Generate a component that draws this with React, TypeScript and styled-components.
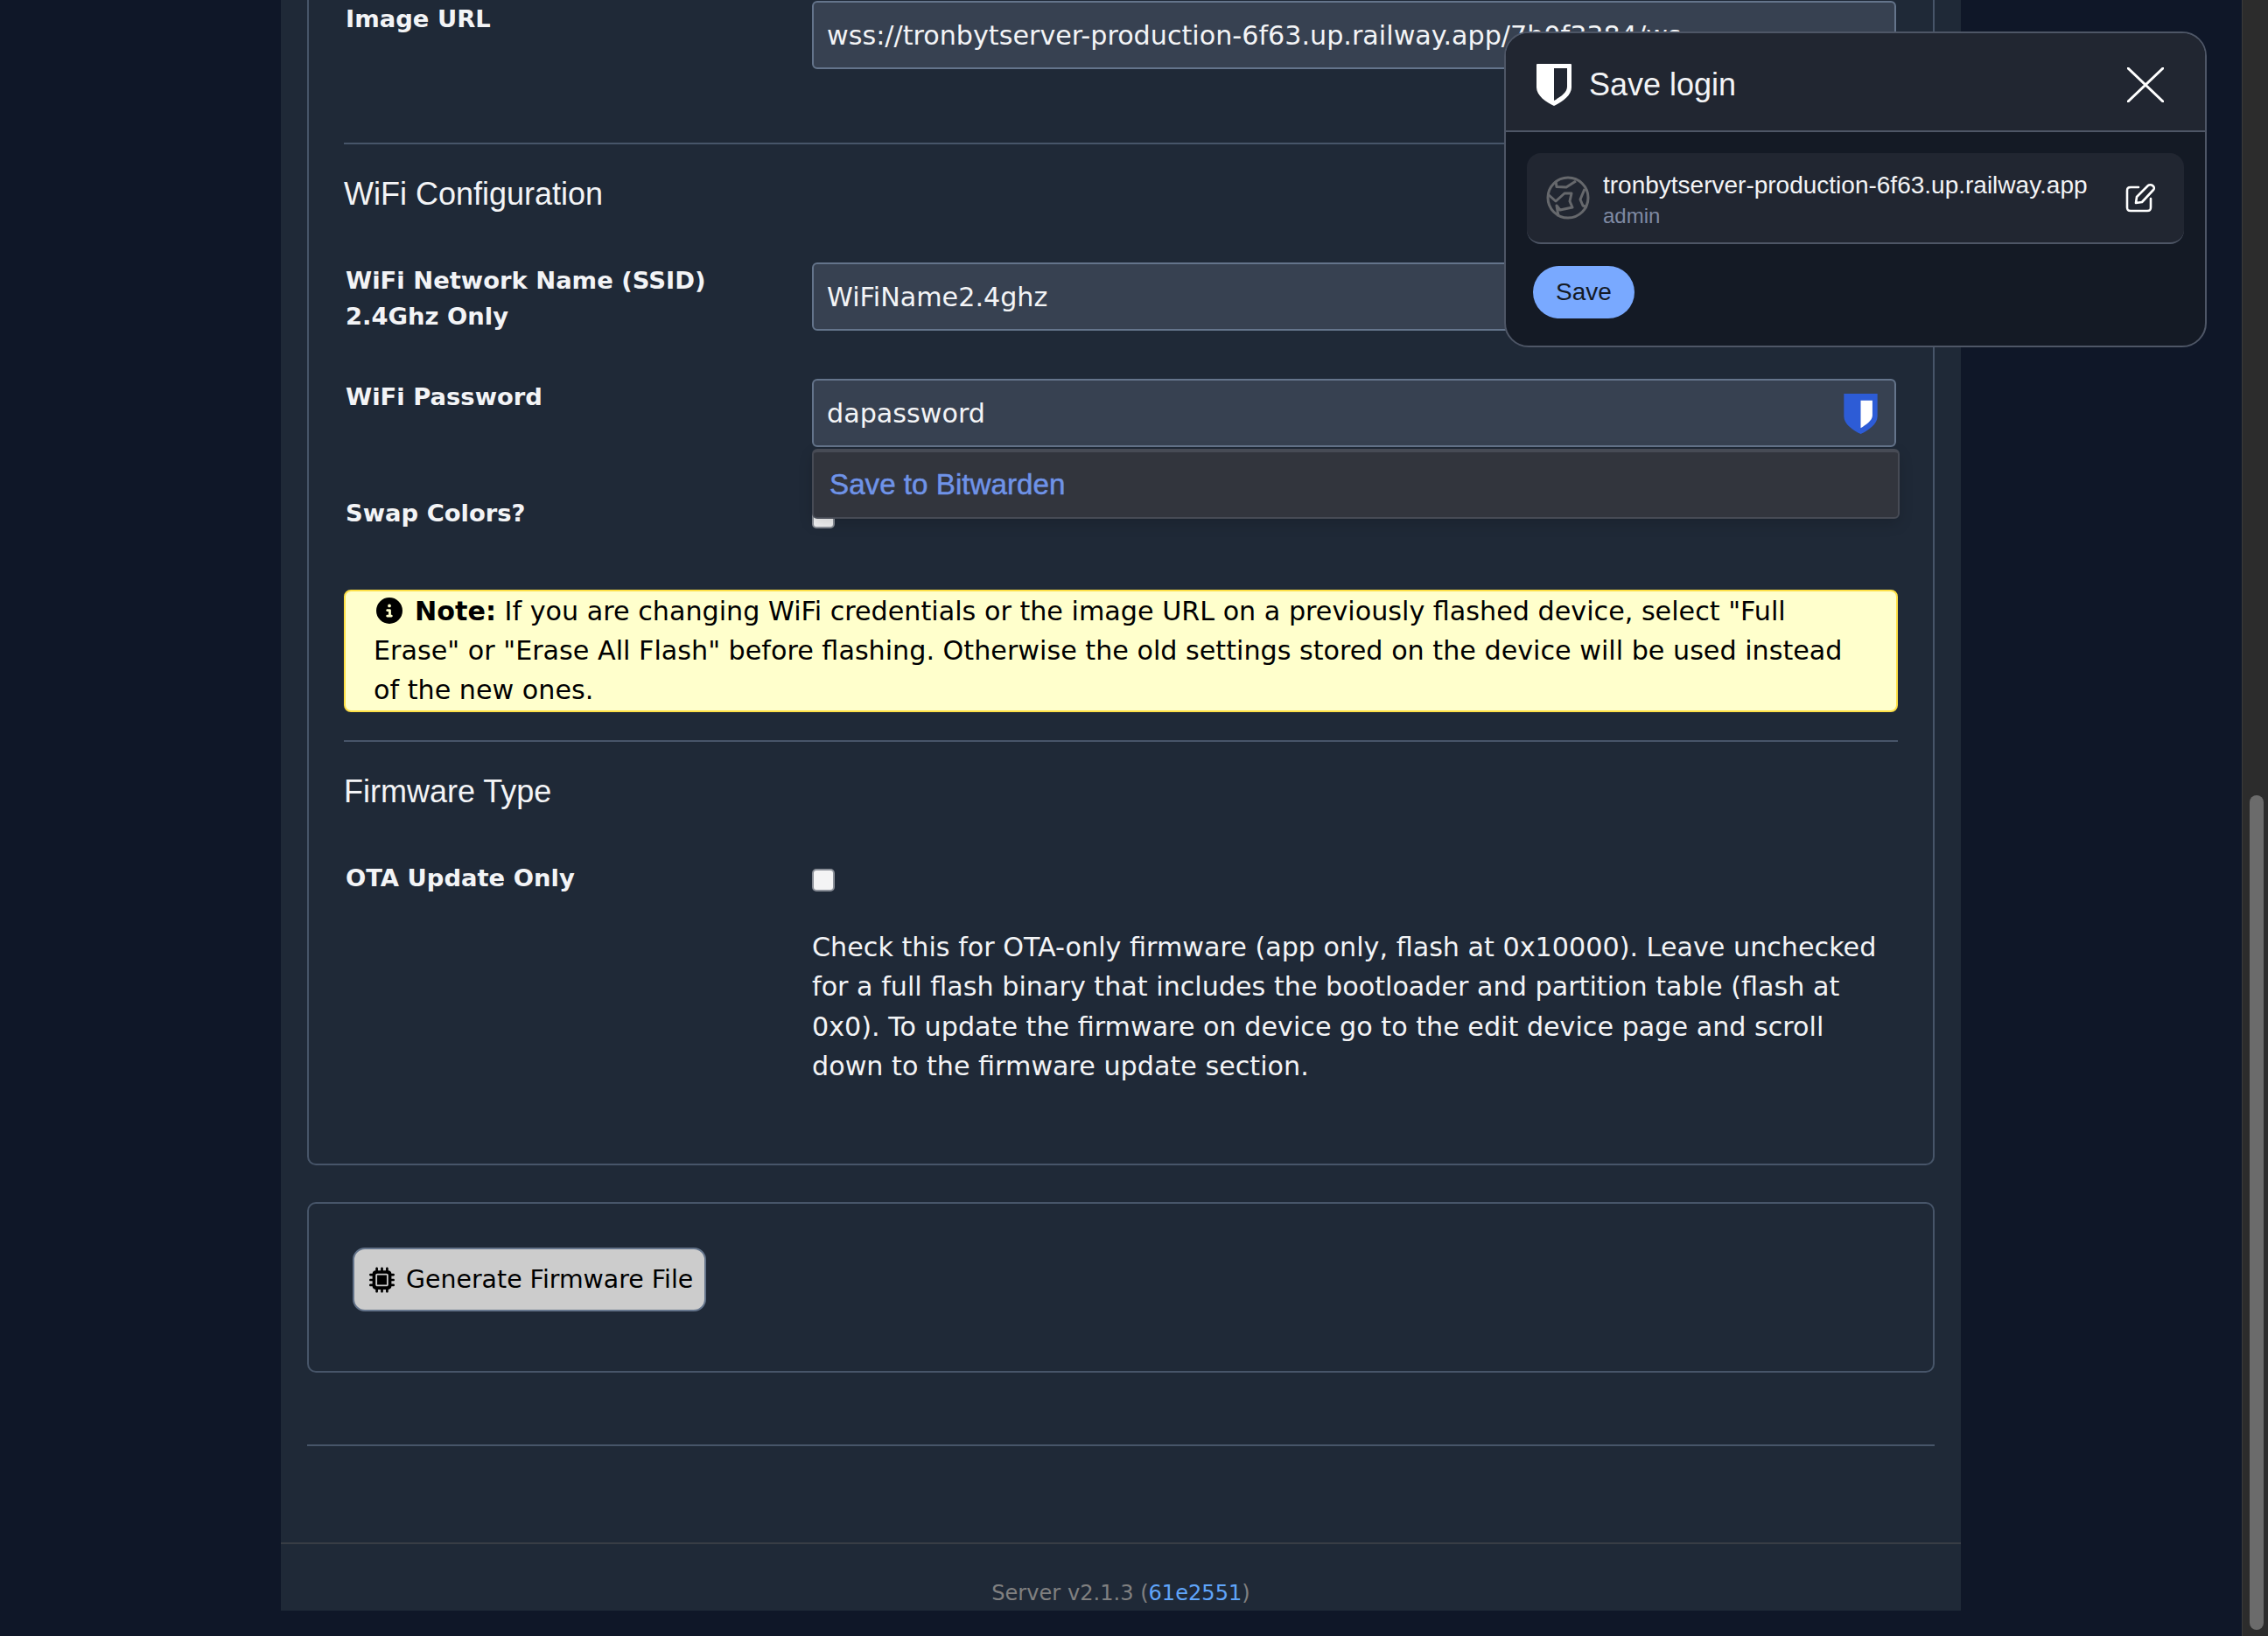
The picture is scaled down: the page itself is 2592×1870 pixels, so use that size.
import React from 'react';
import styled, { createGlobalStyle } from 'styled-components';
import { FaCircleInfo, FaMicrochip } from 'react-icons/fa6';

const GlobalStyle = createGlobalStyle`
    html, body {
        margin: 0;
        padding: 0;
        background-color: #0f1728;
    }
`;

const Screen = styled.div`
    position: relative;
    display: flex;
    width: 2592px;
    height: 1870px;
    overflow: hidden;
    background-color: #0f1728;
    font-family: "DejaVu Sans", Verdana, sans-serif;
`;

const Main = styled.main`
    flex: 1;
    min-width: 0;
`;

const Panel = styled.div`
    width: 1920px;
    margin: 0 auto;
    background-color: #1f2937;
    color: #f3f4f6;
`;

const PanelBody = styled.div`
    padding: 0 30px;
`;

const Card = styled.section<{ $top: number }>`
    margin-top: ${(p) => p.$top}px;
    border: 2px solid #475569;
    border-radius: 10px;
    padding: 0 40px;
`;

// the page is scrolled, so the top edge of this card is out of view
const TopCard = styled(Card)`
    border-top: none;
    border-radius: 0 0 10px 10px;
    padding-top: 1px;
    padding-bottom: 89px;
`;

const ButtonCard = styled(Card)`
    padding: 50px 50px 68px;
`;

const Row = styled.div<{ $gap: number }>`
    display: grid;
    grid-template-columns: 535px 1239px;
    margin-bottom: ${(p) => p.$gap}px;
`;

const Label = styled.label`
    padding-left: 2px;
    font-size: 27.4px;
    font-weight: 700;
    line-height: 41px;
    color: #f3f4f6;
`;

const InputBox = styled.div`
    position: relative;
    box-sizing: border-box;
    height: 78px;
    overflow: hidden;
    display: flex;
    align-items: center;
    padding: 0 15px;
    background-color: #374151;
    border: 2px solid #64748b;
    border-radius: 6px;
    font-size: 30.2px;
    color: #f3f4f6;
    white-space: nowrap;
`;

const FieldShield = styled.svg`
    position: absolute;
    right: 19px;
    top: 15px;
    width: 39px;
    height: 46px;
`;

const CheckBox = styled.span`
    display: block;
    box-sizing: border-box;
    width: 26px;
    height: 26px;
    background-color: #f4f4f5;
    border: 2px solid #8a8f98;
    border-radius: 5px;
`;

const CheckCell = styled.div<{ $top: number }>`
    padding-top: ${(p) => p.$top}px;
`;

const Divider = styled.hr<{ $top: number; $bottom: number }>`
    margin: ${(p) => p.$top}px 0 ${(p) => p.$bottom}px;
    border: none;
    border-top: 2px solid #475569;
`;

const SectionTitle = styled.h3`
    margin: 0 0 56px;
    font-family: "Liberation Sans", Arial, sans-serif;
    font-size: 36px;
    font-weight: 400;
    line-height: 44px;
    color: #f3f4f6;
`;

const NoteBox = styled.div`
    box-sizing: border-box;
    height: 140px;
    padding: 0 30px 0 32px;
    background-color: #ffffcc;
    border: 2px solid #fde047;
    border-radius: 8px;
    color: #000;
    font-size: 30.2px;
    line-height: 45px;
`;

const NoteIcon = styled(FaCircleInfo)`
    width: 30px;
    height: 30px;
    margin: 0 14px 0 3px;
    vertical-align: -4px;
`;

const HelpText = styled.p`
    grid-column: 2;
    margin: 36px 0 0;
    font-size: 30.2px;
    line-height: 45.3px;
    color: #f3f4f6;
`;

const GenerateButton = styled.button`
    display: flex;
    align-items: center;
    gap: 13px;
    box-sizing: border-box;
    height: 73px;
    padding: 0 13px 0 17px;
    background-color: #cccccc;
    border: 2px solid #64748b;
    border-radius: 14px;
    color: #000;
    font-family: inherit;
    font-size: 28.4px;
`;

const ChipIcon = styled(FaMicrochip)`
    width: 29px;
    height: 30px;
`;

const Footer = styled.footer`
    margin-top: 110px;
    padding: 37px 0 1px;
    border-top: 2px solid #383d45;
    text-align: center;
    font-size: 24.1px;
    line-height: 38px;
    color: #808080;
`;

const FooterLink = styled.a`
    color: #60a5fa;
`;

const Scrollbar = styled.div`
    box-sizing: border-box;
    width: 30px;
    height: 100%;
    padding: 909px 6px 0 8px;
    background-color: #2c2c2c;
    border-left: 1px solid #3a3a3a;
`;

const ScrollThumb = styled.div`
    width: 16px;
    height: 954px;
    border-radius: 8px;
    background-color: #6b6b6b;
`;

const SaveMenu = styled.div`
    position: absolute;
    left: 928px;
    top: 513px;
    box-sizing: border-box;
    width: 1243px;
    height: 80px;
    display: flex;
    align-items: center;
    padding-left: 18px;
    background-color: #32353d;
    border: 2px solid #474b55;
    border-top-width: 4px;
    border-radius: 6px;
    box-shadow: 0 6px 16px rgba(0, 0, 0, 0.15);
    font-family: "Liberation Sans", Arial, sans-serif;
    font-size: 33.2px;
    color: #6f93e8;
    -webkit-text-stroke: 0.5px #6f93e8;
`;

const Popup = styled.aside`
    position: absolute;
    left: 1719px;
    top: 36px;
    box-sizing: border-box;
    width: 803px;
    height: 361px;
    overflow: hidden;
    background-color: #141a25;
    border: 2px solid #4e5666;
    border-radius: 28px;
    font-family: "Liberation Sans", Arial, sans-serif;
    color: #f3f4f6;
`;

const PopupHeader = styled.header`
    display: flex;
    align-items: center;
    box-sizing: border-box;
    height: 113px;
    padding: 7px 47px 0 35px;
    background-color: #212631;
    border-bottom: 2px solid #4e5666;
`;

const PopupTitle = styled.span`
    flex: 1;
    margin-left: 20px;
    font-size: 36px;
`;

const LoginCard = styled.div`
    display: flex;
    align-items: center;
    box-sizing: border-box;
    height: 104px;
    margin: 24px 24px 0;
    padding: 0 33px 0 22px;
    background-color: #212631;
    border-bottom: 2px solid #4e5666;
    border-radius: 16px;
`;

const LoginText = styled.div`
    flex: 1;
    margin-left: 15px;
    padding-top: 5px;
`;

const SiteName = styled.div`
    font-size: 28px;
    line-height: 36px;
`;

const UserName = styled.div`
    font-size: 24px;
    line-height: 34px;
    color: #7f8aa3;
`;

const SaveButton = styled.button`
    display: block;
    width: 116px;
    height: 60px;
    margin: 25px 0 0 31px;
    padding: 0;
    border: none;
    border-radius: 30px;
    background-color: #79a9ff;
    color: #141a25;
    font-family: inherit;
    font-size: 28px;
`;

const GlobeSvg = styled.svg`
    filter: blur(0.7px);
`;

const Shield = () => (
    <svg width="40" height="48" viewBox="0 0 40 48">
        <path
            fill="#fff"
            fillRule="evenodd"
            d="M0 1Q0 0 1 0H39Q40 0 40 1V27C40 36 29 44 20 48C11 44 0 36 0 27ZM20 5V42C27 38 35 33 35 26V5Z"
        />
    </svg>
);

const CloseIcon = () => (
    <svg width="42" height="40" viewBox="0 0 42 40">
        <path d="M1 1L41 39M41 1L1 39" stroke="#fff" strokeWidth="3" strokeLinecap="round" fill="none" />
    </svg>
);

const GlobeIcon = () => (
    <GlobeSvg width="50" height="50" viewBox="0 0 50 50" fill="none" stroke="#66686c" strokeWidth="3" strokeLinejoin="round">
        <circle cx="25" cy="25" r="23" />
        <path d="M11 6L12 12.5L23 13L34 6" />
        <path d="M2 21L11 29L21 20L29 20L27 29L30 36L16 39L12 34L14 46" />
        <path d="M44 15L39 27L42 34L47 36" />
    </GlobeSvg>
);

const EditIcon = () => (
    <svg width="34" height="34" viewBox="0 0 34 34" fill="none" stroke="#fff" strokeWidth="2.6" strokeLinecap="round" strokeLinejoin="round">
        <path d="M15 5H6C3 5 2 6 2 9V28C2 31 3 32 6 32H25C28 32 29 31 29 28V18" />
        <path d="M12 23L13 16L26 3C27 2 30 2 31 3L32 4C33 5 33 7 32 8L19 22Z" />
    </svg>
);

export default function App() {
    return (
        <Screen>
            <GlobalStyle />
            <Main>
                <Panel>
                    <PanelBody>
                        <TopCard $top={0}>
                            <Row $gap={84}>
                                <Label>Image URL</Label>
                                <InputBox>wss://tronbytserver-production-6f63.up.railway.app/7b0f3384/ws</InputBox>
                            </Row>
                            <Divider $top={0} $bottom={35} />
                            <SectionTitle>WiFi Configuration</SectionTitle>
                            <Row $gap={51}>
                                <Label>
                                    WiFi Network Name (SSID)
                                    <br />
                                    2.4Ghz Only
                                </Label>
                                <InputBox>WiFiName2.4ghz</InputBox>
                            </Row>
                            <Row $gap={55}>
                                <Label>WiFi Password</Label>
                                <InputBox>
                                    dapassword
                                    <FieldShield viewBox="0 0 40 48">
                                        <path fill="#2d5cd6" d="M0 0H40V27C40 36 29 44 20 48C11 44 0 36 0 27Z" />
                                        <path fill="#fff" d="M20 8H34V26C34 32 26 37 20 41Z" />
                                    </FieldShield>
                                </InputBox>
                            </Row>
                            <Row $gap={67}>
                                <Label>Swap Colors?</Label>
                                <CheckCell $top={12}>
                                    <CheckBox />
                                </CheckCell>
                            </Row>
                            <NoteBox>
                                <NoteIcon />
                                <strong>Note:</strong> If you are changing WiFi credentials or the image URL on a previously flashed device, select "Full Erase" or "Erase All Flash" before flashing. Otherwise the old settings stored on the device will be used instead of the new ones.
                            </NoteBox>
                            <Divider $top={32} $bottom={35} />
                            <SectionTitle>Firmware Type</SectionTitle>
                            <Row $gap={0}>
                                <Label>OTA Update Only</Label>
                                <CheckCell $top={10}>
                                    <CheckBox />
                                </CheckCell>
                                <HelpText>
                                    Check this for OTA-only firmware (app only, flash at 0x10000). Leave unchecked for a full flash binary that includes the bootloader and partition table (flash at 0x0). To update the firmware on device go to the edit device page and scroll down to the firmware update section.
                                </HelpText>
                            </Row>
                        </TopCard>
                        <ButtonCard $top={42}>
                            <GenerateButton>
                                <ChipIcon />
                                Generate Firmware File
                            </GenerateButton>
                        </ButtonCard>
                        <Divider $top={82} $bottom={0} />
                    </PanelBody>
                    <Footer>
                        Server v2.1.3 (<FooterLink>61e2551</FooterLink>)
                    </Footer>
                </Panel>
            </Main>
            <Scrollbar>
                <ScrollThumb />
            </Scrollbar>
            <SaveMenu>Save to Bitwarden</SaveMenu>
            <Popup>
                <PopupHeader>
                    <Shield />
                    <PopupTitle>Save login</PopupTitle>
                    <CloseIcon />
                </PopupHeader>
                <LoginCard>
                    <GlobeIcon />
                    <LoginText>
                        <SiteName>tronbytserver-production-6f63.up.railway.app</SiteName>
                        <UserName>admin</UserName>
                    </LoginText>
                    <EditIcon />
                </LoginCard>
                <SaveButton>Save</SaveButton>
            </Popup>
        </Screen>
    );
}
